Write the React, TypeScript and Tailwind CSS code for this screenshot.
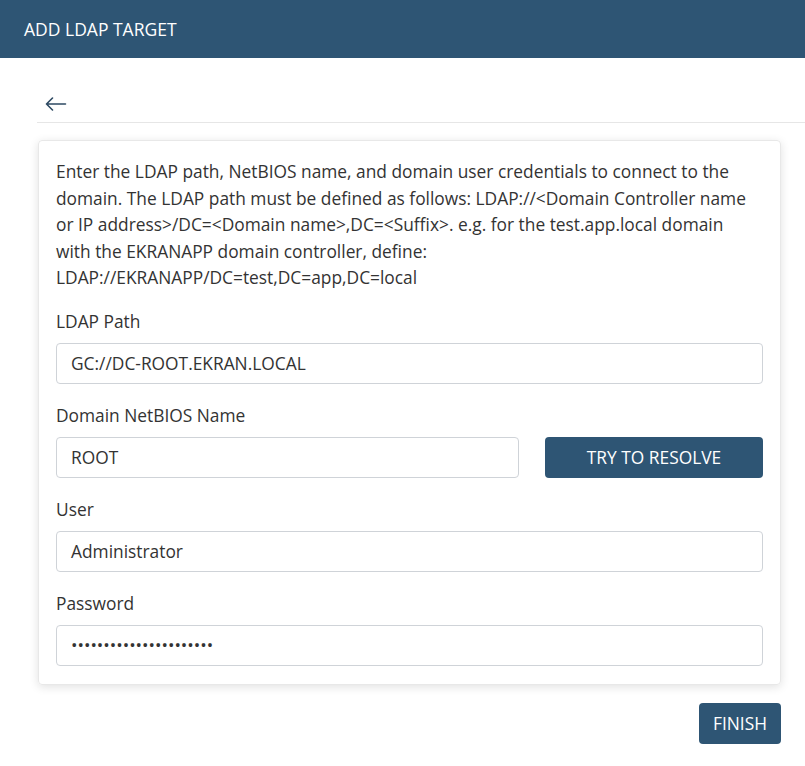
import React from "react";

export default function App() {
  const font = { fontFamily: '"Open Sans", "Noto Sans", sans-serif' };
  return (
    <div className="w-[805px] h-[766px] bg-white text-[#333333] overflow-hidden" style={font}>
      <div className="h-[58px] bg-[#2e5574] flex items-center px-6">
        <span className="text-white text-[17.5px]">ADD LDAP TARGET</span>
      </div>
      <div className="pl-[37px]">
        <div className="h-[65px] border-b border-[#e6e6e6] flex items-center pt-[28px] pl-[8px]">
          <svg width="22" height="14" viewBox="0 0 22 14" fill="none" stroke="#2e4a63" strokeWidth="1.6" strokeLinecap="round" strokeLinejoin="round">
            <path d="M20.5 7H1.5M7.5 1L1.5 7L7.5 13" />
          </svg>
        </div>
        <div className="pr-[24px]">
          <div className="mt-[17px] ml-[1px] border border-[#e8e8e8] rounded-[4px] shadow-[0_2px_10px_rgba(0,0,0,0.12)] px-[17px] pt-[17px] pb-[18px]">
            <p className="text-[17.35px] leading-[26.5px] text-[#333333] pr-[4px]">
              Enter the LDAP path, NetBIOS name, and domain user credentials to connect to the domain. The LDAP path must be defined as follows: LDAP://&lt;Domain Controller name or IP address&gt;/DC=&lt;Domain name&gt;,DC=&lt;Suffix&gt;. e.g. for the test.app.local domain with the EKRANAPP domain controller, define: LDAP://EKRANAPP/DC=test,DC=app,DC=local
            </p>
            <div className="mt-[18px] text-[17.35px] leading-[24px]">LDAP Path</div>
            <div className="mt-[10px] h-[41px] border border-[#cfd3d8] rounded-[4px] flex items-center px-[14px] text-[17.35px]">GC://DC-ROOT.EKRAN.LOCAL</div>
            <div className="mt-[19px] text-[17.35px] leading-[24px]">Domain NetBIOS Name</div>
            <div className="mt-[10px] flex gap-[26px]">
              <div className="w-[463px] h-[41px] border border-[#cfd3d8] rounded-[4px] flex items-center px-[14px] text-[17.35px]">ROOT</div>
              <div className="flex-1 h-[41px] bg-[#2e5574] rounded-[4px] flex items-center justify-center text-white text-[17.35px]">TRY TO RESOLVE</div>
            </div>
            <div className="mt-[19px] text-[17.35px] leading-[24px]">User</div>
            <div className="mt-[10px] h-[41px] border border-[#cfd3d8] rounded-[4px] flex items-center px-[14px] text-[17.35px]">Administrator</div>
            <div className="mt-[19px] text-[17.35px] leading-[24px]">Password</div>
            <div className="mt-[10px] h-[41px] border border-[#cfd3d8] rounded-[4px] flex items-center px-[14px] text-[17.2px]">••••••••••••••••••••••</div>
          </div>
          <div className="flex justify-end mt-[18px]">
            <div className="h-[41px] px-[14px] bg-[#2e5574] rounded-[4px] flex items-center text-white text-[17.35px]">FINISH</div>
          </div>
        </div>
      </div>
    </div>
  );
}
